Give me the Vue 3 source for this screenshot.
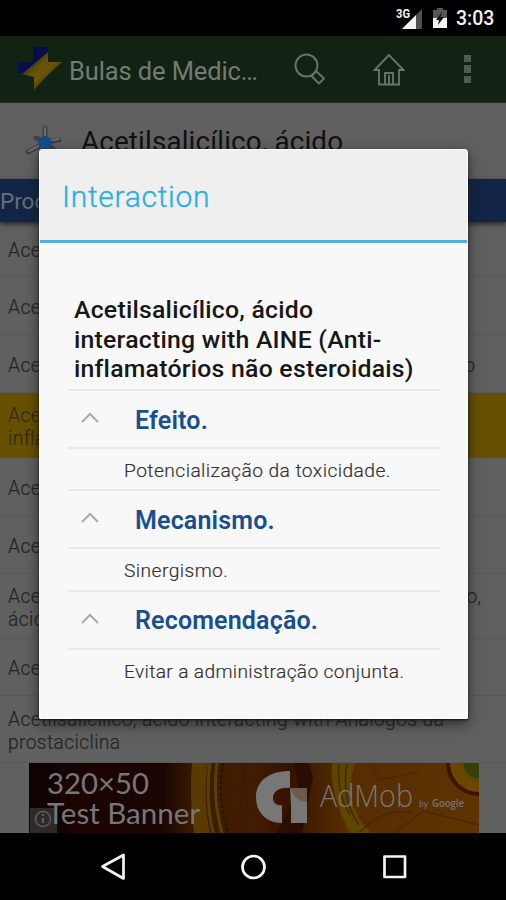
<script setup>
const rows = [
  { height: 53, lines: ['Ace'] },
  { height: 58, lines: ['Ace'] },
  { height: 58, lines: ['Ace'], tail: 'o', tailEnd: 'short' },
  { height: 65, lines: ['Ace', 'infla'], active: true },
  { height: 58, lines: ['Ace'] },
  { height: 58, lines: ['Ace'] },
  { height: 65, lines: ['Ace', 'ácid'], tail: 'o,' },
  { height: 57, lines: ['Ace'] },
  { height: 67, lines: ['Acetilsalicílico, ácido interacting with Análogos da', 'prostaciclina'] },
]
const sections = [
  { title: 'Efeito.', text: 'Potencialização da toxicidade.' },
  { title: 'Mecanismo.', text: 'Sinergismo.' },
  { title: 'Recomendação.', text: 'Evitar a administração conjunta.' },
]
</script>

<template>
  <div class="phone">
    <div class="status">
      <svg class="signal" width="28" height="24" viewBox="0 0 28 24">
        <path d="M26 3V23H6Z" fill="#505050" />
        <path d="M20 9V23H6Z" fill="#f2f2f2" />
        <text x="0" y="12" class="net" textLength="14" lengthAdjust="spacingAndGlyphs">3G</text>
      </svg>
      <svg class="battery" width="16" height="22" viewBox="0 0 16 22">
        <path d="M1 3H5V1H11V3H15V21H1Z" fill="#555" />
        <path d="M1 11H15V21H1Z" fill="#f2f2f2" />
        <path d="M10 5L4 13H7L6 18L12 10H8.500Z" fill="#111" />
      </svg>
      <span class="clock">3:03</span>
    </div>

    <header class="appbar">
      <svg class="logo" width="46" height="46" viewBox="0 0 46 46">
        <defs>
          <linearGradient id="gold" x1="0" y1="0" x2="1" y2="1">
            <stop offset=".2" stop-color="#22252a" />
            <stop offset=".4" stop-color="#665207" />
            <stop offset=".55" stop-color="#6b5508" />
            <stop offset=".75" stop-color="#2c3511" />
          </linearGradient>
        </defs>
        <path d="M16 2H31V11L15 28H1V17H16Z" fill="#080f48" />
        <path d="M31 7V17H45L30 31L17 45V32L5 29Z" fill="url(#gold)" />
      </svg>
      <span class="apptitle">Bulas de Medic…</span>
      <svg class="search" width="32" height="32" viewBox="0 0 32 32" fill="none" stroke="#66756a" stroke-width="1.900">
        <circle cx="12.500" cy="12.500" r="11" />
        <path d="M17.500 23L22 18L30 25.500L25 30.500Z" stroke-linejoin="round" />
      </svg>
      <svg class="home" width="32" height="33" viewBox="0 0 32 33" fill="none" stroke="#66756a" stroke-width="1.900">
        <path d="M16 2L1.500 17H6V31.500H26V17H30.500Z" />
        <path d="M12 31V20H20V31M16 31V22" />
      </svg>
      <span class="more"><i></i><i></i><i></i></span>
    </header>

    <div class="heading">
      <svg width="38" height="38" viewBox="0 0 38 38">
        <g stroke="#404040" stroke-width="5" stroke-linecap="round">
          <path d="M21 18V5M21 19L35 17M21 20L4 29M21 19L12 15M21 20L34 30" />
        </g>
        <path d="M21 18V5M20 20L5 28M23 18L35 16" stroke="#6d6d6d" stroke-width="2" stroke-linecap="round" />
        <circle cx="21" cy="20" r="7" fill="#124e86" />
      </svg>
      <span>Acetilsalicílico, ácido</span>
    </div>
    <div class="bluebar">Produ</div>

    <div class="list">
      <div v-for="(row, i) in rows" :key="i" class="row" :class="{ active: row.active }" :style="{ height: row.height + 'px' }">
        <div class="lines">
          <div v-for="line in row.lines" :key="line">{{ line }}</div>
        </div>
        <span v-if="row.tail" :class="['tail', row.tailEnd]">{{ row.tail }}</span>
      </div>
    </div>

    <div class="adwrap">
      <svg width="450" height="70" viewBox="0 0 450 70">
        <defs>
          <linearGradient id="ad">
            <stop offset="0" stop-color="#0e0402" />
            <stop offset=".3" stop-color="#1c0602" />
            <stop offset=".37" stop-color="#3b1d02" />
            <stop offset=".5" stop-color="#421b00" />
            <stop offset=".58" stop-color="#351300" />
            <stop offset=".7" stop-color="#562d00" />
            <stop offset="1" stop-color="#5d3300" />
          </linearGradient>
        </defs>
        <rect width="450" height="70" fill="url(#ad)" />
        <path d="M60 0L28 25L40 70H95L78 38L120 0Z" fill="#200602" opacity=".7" />
        <path d="M163 0H179Q173 35 181 70H165Q160 30 163 0Z" fill="#5b3902" />
        <path d="M181 0Q176 35 184 70M188 0Q183 35 193 70" fill="none" stroke="#574002" stroke-width="3" />
        <path d="M194 0Q188 35 199 70" fill="none" stroke="#271300" stroke-width="2" stroke-dasharray="3 3" />
        <path d="M197 28L245 8M201 62L243 43M216 0L210 65" fill="none" stroke="#3b1900" stroke-width="1" />
        <path d="M265 0L270 28L248 70H273L284 15L280 0Z" fill="#2b0c00" />
        <path d="M303 0Q300 30 321 70H342Q312 41 326 0Z" fill="#5e4600" />
        <path d="M310 0Q307 30 321 52M318 0Q312 36 330 62M330 70Q355 43 384 50M342 0L350 17L389 9M365 70L394 48L450 62" fill="none" stroke="#4a2900" stroke-width="1.500" />
        <circle cx="450" cy="0" r="31" fill="#6c4600" stroke="#3a1500" stroke-width="4" />
        <circle cx="450" cy="0" r="17" fill="#354007" stroke="#5b4a00" stroke-width="3" />
        <rect x="1" y="45" width="27" height="25" fill="#353030" opacity=".85" />
        <circle cx="14" cy="56" r="7.500" fill="none" stroke="#615d5d" stroke-width="1.500" />
        <path d="M14 55V60M14 51V53" stroke="#615d5d" stroke-width="2" />
        <text x="18" y="31" class="adtext" textLength="102" lengthAdjust="spacingAndGlyphs">320×50</text>
        <text x="18" y="61" class="adtext" textLength="153" lengthAdjust="spacingAndGlyphs">Test Banner</text>
        <path d="M261 8V25C250 24 244 29 244 35C244 40 248 43 253 42V60C237 60 227 49 227 34C227 18 240 8 261 8Z" fill="#777" />
        <path d="M261 25H278V60H262V43Z" fill="#777" />
        <path d="M261 25H278V39Q267 39 261 25Z" fill="#6a5c4d" />
        <text x="291" y="44" class="admob" textLength="93" lengthAdjust="spacingAndGlyphs">AdMob</text>
        <text x="390" y="44" class="by" textLength="9" lengthAdjust="spacingAndGlyphs">by</text>
        <text x="403" y="44" class="google" textLength="32" lengthAdjust="spacingAndGlyphs">Google</text>
      </svg>
    </div>

    <nav class="nav">
      <svg width="506" height="66" viewBox="0 0 506 66" fill="none" stroke="#f4f4f4" stroke-width="2.700" stroke-linejoin="round">
        <path d="M102.500 33.500L123.500 22V45.500Z" />
        <circle cx="253.500" cy="34" r="11" />
        <rect x="384.500" y="23.500" width="20.500" height="20.500" />
      </svg>
    </nav>

    <section class="dialog">
      <h1>Interaction</h1>
      <div class="content">
        <h2>Acetilsalicílico, ácido<br>interacting with AINE (Anti-<br>inflamatórios não esteroidais)</h2>
        <template v-for="section in sections" :key="section.title">
          <h3>
            <svg width="18" height="12" viewBox="0 0 18 12"><path d="M1 10L9 2L17 10" fill="none" stroke="#aaa" stroke-width="2" /></svg>
            <span>{{ section.title }}</span>
          </h3>
          <p>{{ section.text }}</p>
        </template>
      </div>
    </section>
  </div>
</template>

<style>
body { margin: 0; background: #606060; }
</style>

<style scoped>
* { box-sizing: border-box; }
.phone { position: relative; width: 506px; height: 900px; overflow: hidden; background: #606060; font-family: Roboto, sans-serif; }
.phone svg { display: block; flex: none; }
.status { height: 36px; background: #000; color: #f2f2f2; display: flex; align-items: center; padding-left: 396px; }
.net { font: 700 12px Roboto, sans-serif; fill: #f2f2f2; }
.battery { margin-left: 8px; margin-top: 0; }
.signal { margin-top: -1px; }
.clock { margin-left: 8px; font-size: 19.5px; font-weight: 500; line-height: 36px; padding-top: 2px; }
.appbar { height: 67px; background: #122313; display: flex; align-items: center; padding-left: 17px; border-bottom: 1px solid #243025; }
.logo { margin-top: -2px; }
.apptitle { width: 190px; margin-left: 6px; padding-top: 3px; color: #737c74; font-size: 25.5px; letter-spacing: -.12px; white-space: nowrap; }
.search { margin-left: 35px; }
.home { margin-left: 47px; }
.more { margin-left: 59px; display: grid; gap: 3px; }
.more i { width: 7px; height: 7.5px; background: #4c5f4d; }
.heading { height: 76px; padding: 20px 0 0 24px; display: flex; align-items: flex-start; color: #101010; font-size: 27.8px; line-height: 38px; letter-spacing: .15px; white-space: nowrap; }
.heading span { margin-left: 19px; }
.bluebar { height: 43px; background: #122546; color: #686f7b; font-size: 22.5px; line-height: 44px; box-shadow: 0 2px 5px #242424; position: relative; }
.list { padding-top: 2px; color: #242424; font-size: 19.3px; line-height: 22.8px; }
.row { display: flex; align-items: center; justify-content: space-between; padding: 5px 25px 0 8px; border-bottom: 1px solid #595959; white-space: nowrap; }
.row:first-child { padding-top: 2px; }
.row.active { background: #665000; border-color: #665000; color: #302a12; }
.lines { font-weight: 300; letter-spacing: .35px; -webkit-text-stroke: .2px; }
.tail { font-weight: 300; align-self: flex-start; padding-top: 7px; -webkit-text-stroke: .2px; }
.short { align-self: center; padding: 0 6px 0 0; }
.adwrap { position: relative; height: 70px; padding-left: 29px; }
.adtext { font: 400 28px Lato, sans-serif; fill: #777; }
.admob { font: 300 31px "Open Sans", sans-serif; fill: #777; }
.by { font: italic 9px Lato, sans-serif; fill: #777; }
.google { font: 600 11px "Open Sans", sans-serif; fill: #777; }
.nav { height: 67px; background: #000; }
.dialog { position: absolute; left: 39px; top: 149px; width: 429px; height: 570px; background: #f8f8f8; border: 1px solid #fcfcfc; border-radius: 3px 3px 1px 1px; box-shadow: 0 1px 2px #111, 0 5px 13px #171717b0; }
h1 { margin: 0; height: 93px; padding: 0 0 0 22px; background: #efefef; border-bottom: 3px solid #4faedb; color: #2caee0; font-size: 30px; font-weight: 300; line-height: 94px; letter-spacing: .7px; -webkit-text-stroke: .35px; }
.content { padding: 52px 27px 0 28px; }
h2 { height: 96px; margin: 0; padding-left: 6px; border-bottom: 2px solid #e9e9e9; color: #171717; font-size: 24.8px; letter-spacing: .24px; line-height: 29.7px; font-weight: 500; white-space: nowrap; }
h3 { height: 58px; margin: 0; padding-left: 13px; border-bottom: 2px solid #e9e9e9; display: flex; align-items: center; color: #184f91; font-size: 25px; letter-spacing: .17px; font-weight: 600; }
h3 svg { margin-top: -2px; }
h3 span { margin-left: 36px; padding-top: 2px; }
p { height: 42.3px; margin: 0; padding-left: 56px; border-bottom: 2px solid #e9e9e9; color: #333; font-size: 19.2px; font-weight: 300; line-height: 43px; letter-spacing: .44px; -webkit-text-stroke: .2px; white-space: nowrap; }
p:last-child { border: 0; letter-spacing: .34px; }
</style>
